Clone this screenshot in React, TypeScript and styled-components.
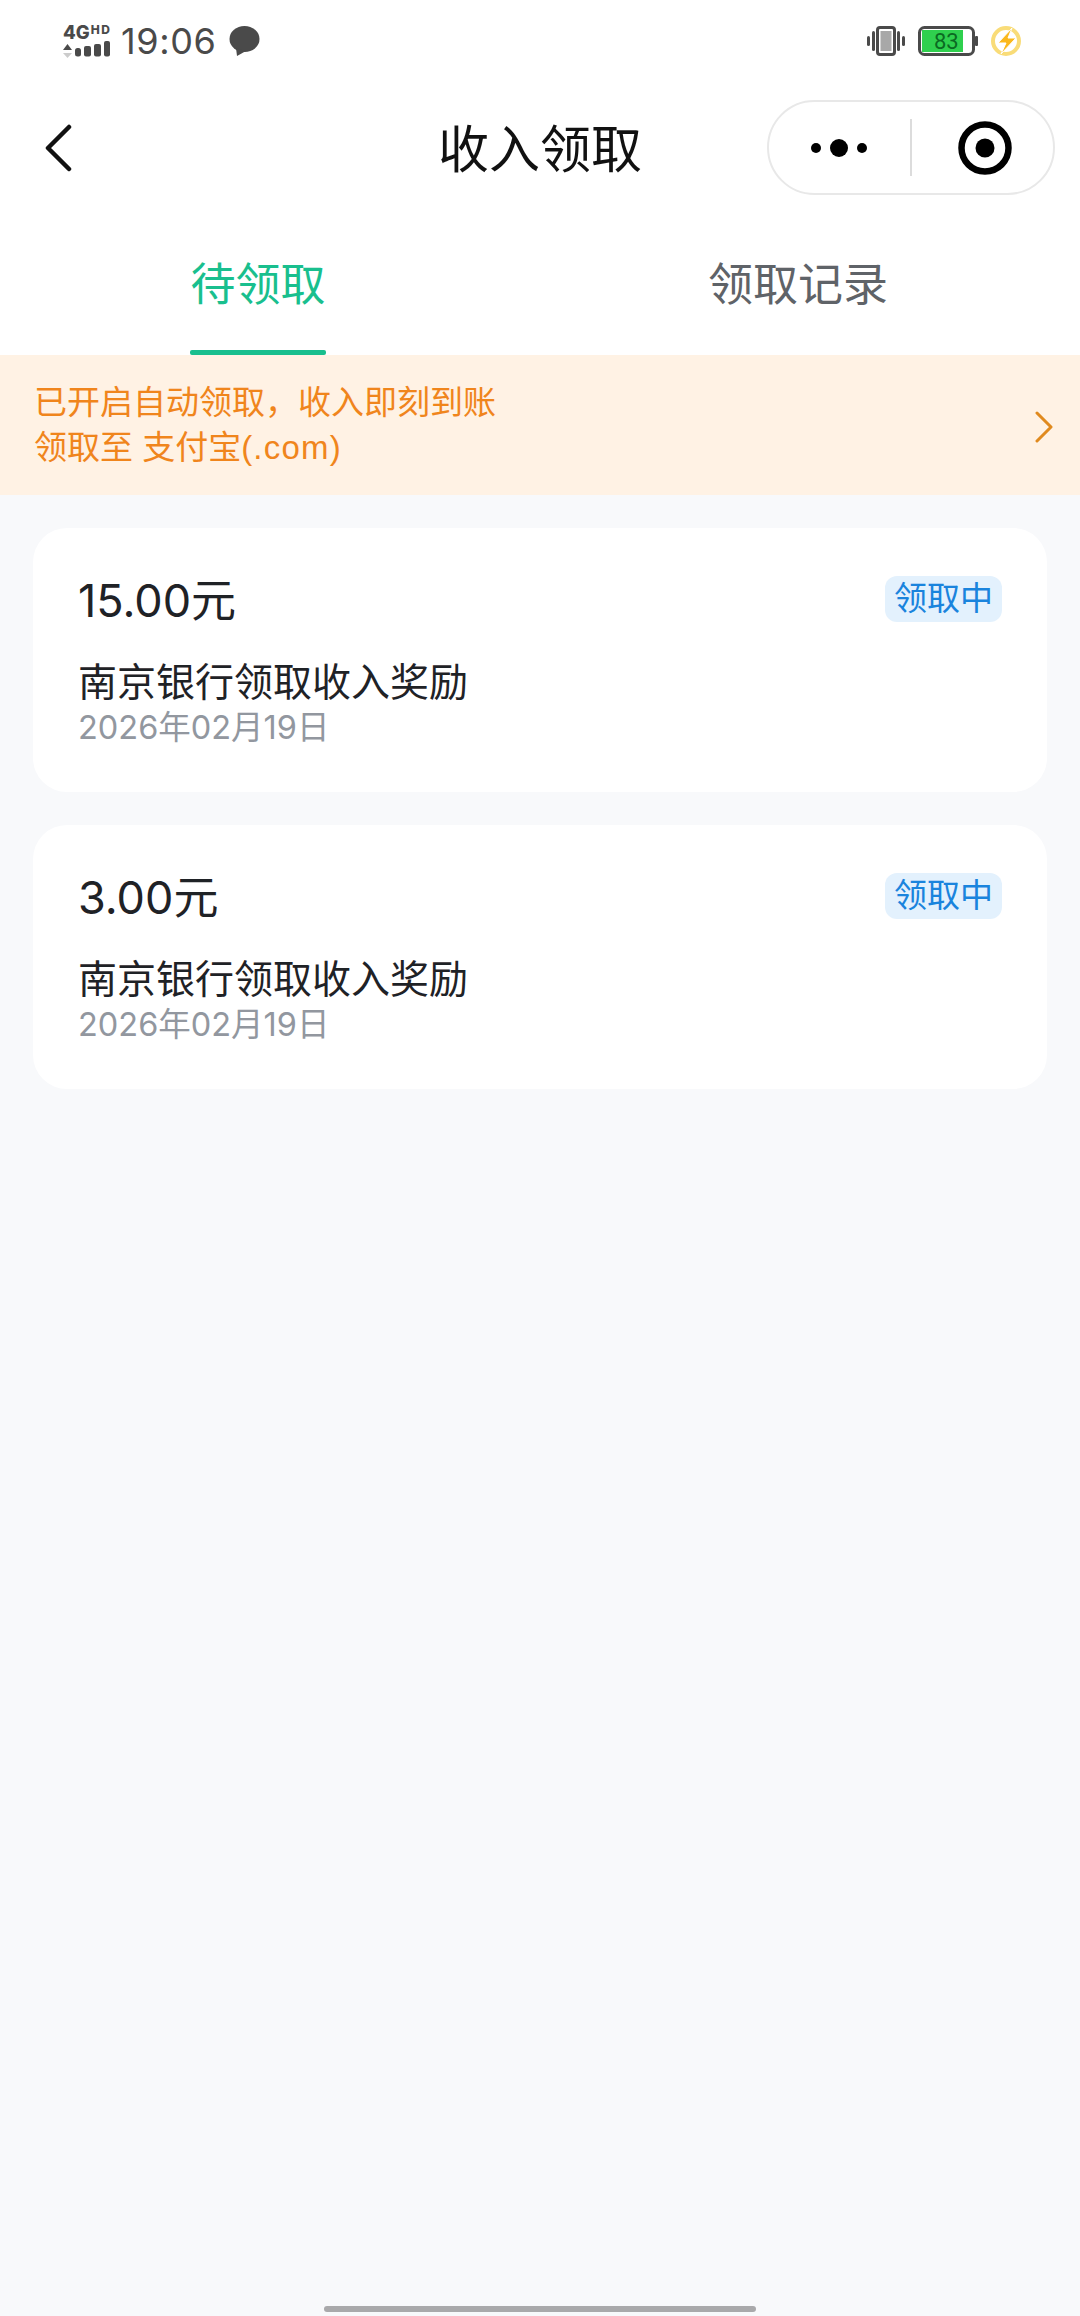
import React from "react";
import styled, { createGlobalStyle } from "styled-components";

const Global = createGlobalStyle`
	html, body {
		margin: 0;
		padding: 0;
		background: #f8f9fb;
	}
	body {
		font-family: Inter, "Noto Sans CJK SC", sans-serif;
	}
`;

const Page = styled.div`
	width: 1080px;
	height: 2316px;
	display: flex;
	flex-direction: column;
	background: #f8f9fb;
	overflow: hidden;
`;

const Header = styled.div`
	background: #fff;
`;

const StatusBar = styled.div`
	height: 80px;
	display: flex;
	align-items: center;
	justify-content: space-between;
	padding: 2px 58px 0 63px;
	box-sizing: border-box;
`;

const StatusGroup = styled.div<{ $gap: number }>`
	display: flex;
	align-items: center;
	gap: ${(p) => p.$gap}px;
`;

const Network = styled.div`
	width: 48px;
	display: flex;
	flex-direction: column;
	gap: 1px;
`;

const NetworkLabel = styled.div`
	display: flex;
	align-items: flex-start;
	height: 15px;
	font-size: 18.5px;
	line-height: 15px;
	font-weight: 800;
	color: #4a4a4a;
`;

const NetworkSup = styled.span`
	font-size: 12px;
	line-height: 10px;
	letter-spacing: 1.5px;
	margin-left: 1px;
`;

const Time = styled.span`
	font-size: 36px;
	line-height: 42px;
	letter-spacing: 0.6px;
	color: #4a4a4a;
`;

const Nav = styled.div`
	height: 95px;
	margin-top: 20px;
	display: flex;
	align-items: center;
	justify-content: space-between;
	padding: 0 25px 0 44px;
	position: relative;
`;

const Title = styled.div`
	position: absolute;
	left: 0;
	right: 0;
	top: 20px;
	text-align: center;
	font-size: 51px;
	line-height: 60px;
	color: #111;
	pointer-events: none;
`;

const Capsule = styled.div`
	width: 288px;
	height: 95px;
	box-sizing: border-box;
	border: 2px solid #e8e8e8;
	border-radius: 48px;
	display: flex;
	align-items: center;
`;

const CapsuleSide = styled.div<{ $right?: boolean }>`
	flex: 0 0 141px;
	box-sizing: border-box;
	display: flex;
	align-items: center;
	justify-content: center;
	padding-left: ${(p) => (p.$right ? 5 : 0)}px;
`;

const CapsuleDivider = styled.div`
	width: 2px;
	height: 57px;
	background: #dcdcdc;
`;

const Tabs = styled.div`
	height: 160px;
	display: flex;
`;

const Tab = styled.div<{ $active?: boolean }>`
	width: 540px;
	display: flex;
	justify-content: center;
	padding-right: 24px;
	box-sizing: border-box;
	font-size: 45px;
	line-height: 60px;
	color: ${(p) => (p.$active ? "#19bf8e" : "#5f6368")};
`;

const TabLabel = styled.span<{ $active?: boolean }>`
	position: relative;
	height: 100%;
	display: block;
	padding-top: 60px;
	box-sizing: border-box;
	&::after {
		content: "";
		display: ${(p) => (p.$active ? "block" : "none")};
		position: absolute;
		left: 0;
		right: 0;
		bottom: 0;
		height: 5px;
		border-radius: 2px;
		background: #19bf8e;
	}
`;

const Banner = styled.div`
	height: 140px;
	background: #fff2e4;
	display: flex;
	align-items: center;
	justify-content: space-between;
	padding: 0 26px 0 34px;
	color: #f0851c;
`;

const BannerText = styled.div`
	font-family: "Liberation Sans", "Noto Sans CJK SC", sans-serif;
	font-size: 33px;
	line-height: 45px;
`;

const BannerLatin = styled.span`
	letter-spacing: 1.2px;
`;

const BannerArrow = styled.svg`
	margin-top: 4px;
`;

const List = styled.div`
	flex: 1;
	padding: 33px 33px 0;
	display: flex;
	flex-direction: column;
	gap: 33px;
`;

const Card = styled.div`
	height: 264px;
	box-sizing: border-box;
	padding: 43px 45px 0;
	background: #fff;
	border-radius: 34px;
`;

const CardTop = styled.div`
	display: flex;
	align-items: flex-start;
	justify-content: space-between;
`;

const Amount = styled.div`
	font-size: 45px;
	line-height: 60px;
	color: #1f2226;
`;

const Badge = styled.div`
	width: 117px;
	height: 46px;
	margin-top: 5px;
	border-radius: 12px;
	background: #e3f1fd;
	color: #1a84dd;
	font-size: 33px;
	line-height: 44px;
	text-align: center;
`;

const Name = styled.div`
	margin-top: 28px;
	font-size: 39px;
	line-height: 46px;
	color: #1f2226;
`;

const DateText = styled.div`
	margin-top: 1px;
	font-size: 32.5px;
	line-height: 44px;
	color: #92979f;
`;

const HomeBar = styled.div`
	width: 432px;
	height: 6px;
	margin: 0 auto 4px;
	border-radius: 3px;
	background: #a9a9ab;
`;

const rows = [{ amount: "15.00元" }, { amount: "3.00元" }];

const App: React.FC = () => {
	return (
		<Page>
			<Global />
			<Header>
				<StatusBar>
					<StatusGroup $gap={10}>
						<Network>
							<NetworkLabel>
								4G<NetworkSup>HD</NetworkSup>
							</NetworkLabel>
							<svg width="48" height="17" viewBox="0 0 48 17" fill="#4a4a4a">
								<path d="M0 9l4.5-6L9 9z" />
								<path d="M0 12l4.5 5L9 12z" fill="#ccc" />
								<rect x="12" y="7" width="6" height="8.5" rx="2.5" />
								<rect x="21" y="5" width="7" height="10.5" rx="2" />
								<rect x="31" y="3" width="7" height="12.5" rx="2" />
								<rect x="41" y="0" width="6" height="15.5" rx="2" />
							</svg>
						</Network>
						<Time>19:06</Time>
						<svg width="31" height="30" viewBox="0 0 31 30" fill="#4a4a4a" style={{ marginLeft: 3 }}>
							<ellipse cx="15.5" cy="13" rx="15" ry="13" />
							<path d="M7 22l1 8 9-5z" />
						</svg>
					</StatusGroup>
					<StatusGroup $gap={12}>
						<svg width="38" height="30" viewBox="0 0 38 30" style={{ marginRight: 1 }}>
							<rect x="0" y="10" width="3" height="10" rx="1.5" fill="#4a4a4a" />
							<rect x="5" y="5" width="3" height="20" rx="1.5" fill="#4a4a4a" />
							<rect x="30" y="5" width="3" height="20" rx="1.5" fill="#4a4a4a" />
							<rect x="35" y="10" width="3" height="10" rx="1.5" fill="#4a4a4a" />
							<rect x="10.5" y="1.5" width="17" height="27" rx="2.5" fill="#fff" stroke="#4a4a4a" strokeWidth="3" />
							<rect x="13.5" y="5" width="11" height="20" fill="#a8a8a8" />
						</svg>
						<svg width="60" height="30" viewBox="0 0 60 30">
							<rect x="1.5" y="1.5" width="54" height="27" rx="5" fill="#fff" stroke="#4a4a4a" strokeWidth="3" />
							<rect x="4" y="4" width="41" height="22" fill="#2fd04e" />
							<rect x="57" y="10" width="3" height="10" rx="1" fill="#4a4a4a" />
							<text x="16" y="23" fontSize="22" fill="#0b6a22" fontFamily="Roboto, sans-serif">83</text>
						</svg>
						<svg width="32" height="32" viewBox="0 0 32 32">
							<circle cx="16" cy="16" r="13" fill="none" stroke="#f9dc78" strokeWidth="4" />
							<path d="M22 3L8 18h8l-5 11 15-16h-8z" fill="#fbb81c" stroke="#fff" strokeWidth="1" />
						</svg>
					</StatusGroup>
				</StatusBar>
				<Nav>
					<svg width="30" height="48" viewBox="0 0 30 48" fill="none" stroke="#111" strokeWidth="4.5" strokeLinecap="round" strokeLinejoin="round">
						<path d="M25 3L4 24l21 21" />
					</svg>
					<Title>收入领取</Title>
					<Capsule>
						<CapsuleSide>
							<svg width="58" height="20" viewBox="0 0 58 20" fill="#000">
								<circle cx="5" cy="10" r="5" />
								<circle cx="28" cy="10" r="9" />
								<circle cx="51" cy="10" r="5" />
							</svg>
						</CapsuleSide>
						<CapsuleDivider />
						<CapsuleSide $right>
							<svg width="54" height="54" viewBox="0 0 54 54">
								<circle cx="27" cy="27" r="23.5" fill="none" stroke="#000" strokeWidth="6.5" />
								<circle cx="27" cy="27" r="9.5" fill="#000" />
							</svg>
						</CapsuleSide>
					</Capsule>
				</Nav>
				<Tabs>
					<Tab $active>
						<TabLabel $active>待领取</TabLabel>
					</Tab>
					<Tab>
						<TabLabel>领取记录</TabLabel>
					</Tab>
				</Tabs>
			</Header>
			<Banner>
				<BannerText>
					已开启自动领取，收入即刻到账
					<br />
					领取至 支付宝<BannerLatin>(.com)</BannerLatin>
				</BannerText>
				<BannerArrow width="20" height="32" viewBox="0 0 20 32" fill="none" stroke="#e08a1e" strokeWidth="3" strokeLinecap="round" strokeLinejoin="round">
					<path d="M3 2l14 14L3 30" />
				</BannerArrow>
			</Banner>
			<List>
				{rows.map((r) => (
					<Card key={r.amount}>
						<CardTop>
							<Amount>{r.amount}</Amount>
							<Badge>领取中</Badge>
						</CardTop>
						<Name>南京银行领取收入奖励</Name>
						<DateText>2026年02月19日</DateText>
					</Card>
				))}
			</List>
			<HomeBar />
		</Page>
	);
};

export default App;
